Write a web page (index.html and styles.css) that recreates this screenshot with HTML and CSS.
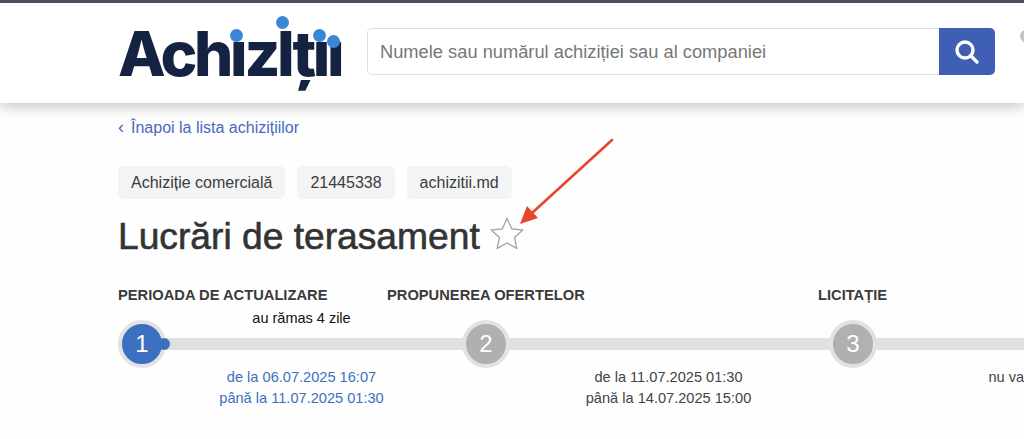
FILE: index.html
```html
<!DOCTYPE html>
<html lang="ro">
<head>
    <meta charset="UTF-8">
    <meta name="viewport" content="width=device-width, initial-scale=1.0">
    <title>Lucrări de terasament</title>
    <link rel="stylesheet" href="styles.css">
</head>
<body>
    <header class="header">
        <a class="logo" href="#">Ach<span class="logo-low">ı</span>z<span class="logo-tall">I</span>ț<span class="logo-low">ı</span><span class="logo-last">ı</span></a>
        <form class="search">
            <input class="search-input" type="text" placeholder="Numele sau numărul achiziției sau al companiei">
            <button class="search-button" type="button" aria-label="Caută">
                <svg width="26" height="26" viewBox="0 0 26 26" fill="none" stroke="#fff">
                    <circle cx="11" cy="11" r="8" stroke-width="3.4"/>
                    <path d="M17 17l6 6" stroke-width="3.4" stroke-linecap="round"/>
                </svg>
            </button>
        </form>
        <svg class="heart" width="20" height="18" viewBox="0 0 20 18">
            <path d="M10 18C4 13 0 10 0 5.500 0 2.500 2.300 0 5.200 0 7.200 0 9 1 10 3 11 1 12.800 0 14.800 0 17.700 0 20 2.500 20 5.500 20 10 16 13 10 18z" fill="#c4c4c4"/>
        </svg>
    </header>

    <main class="content">
        <a class="back" href="#"><span class="back-arrow">‹</span>Înapoi la lista achizițiilor</a>

        <div class="chips">
            <span class="chip">Achiziție comercială</span>
            <span class="chip">21445338</span>
            <span class="chip">achizitii.md</span>
        </div>

        <h1 class="title">
            Lucrări de terasament
            <svg class="star" width="34" height="32" viewBox="0 0 34 32">
                <path d="M17 1.500l4.700 10.300 11 1.200-8.200 7.500 2.300 11-9.800-5.600-9.800 5.600 2.300-11L1.300 13l11-1.200z" fill="#fff" stroke="#a3a3a3" stroke-width="1.300"/>
            </svg>
        </h1>

        <div class="stages">
            <div class="stage-titles">
                <span class="stage-title first">PERIOADA DE ACTUALIZARE</span>
                <span class="stage-title second">PROPUNEREA OFERTELOR</span>
                <span class="stage-title">LICITAȚIE</span>
            </div>
            <div class="remaining">au rămas 4 zile</div>
            <div class="track">
                <span class="step active">1</span>
                <span class="segment segment-a"></span>
                <span class="step">2</span>
                <span class="segment segment-b"></span>
                <span class="step">3</span>
                <span class="segment segment-c"></span>
            </div>
            <div class="dates">
                <div class="date active">de la 06.07.2025 16:07<br>până la 11.07.2025 01:30</div>
                <div class="date">de la 11.07.2025 01:30<br>până la 14.07.2025 15:00</div>
                <div class="date">nu va avea loc</div>
            </div>
        </div>
    </main>

    <!-- red annotation arrow over the star -->
    <svg class="arrow" width="110" height="100" viewBox="0 0 110 100">
        <path d="M100 3L20 76" fill="none" stroke="#e8452f" stroke-width="2.600" stroke-linecap="round"/>
        <path d="M8 87l7-18 11 12z" fill="#e8452f"/>
    </svg>
</body>
</html>
```

FILE: styles.css
```css
html, body {
    height: 439px;
    overflow: hidden;
}
body {
    margin: 0;
    position: relative;
    font-family: "Liberation Sans", sans-serif;
    background-color: #fefefe;
    color: #333;
}
a {
    text-decoration: none;
}

.header {
    display: flex;
    align-items: flex-start;
    box-sizing: border-box;
    height: 103px;
    padding-left: 118px;
    background: white;
    border-top: 3px solid #4a4f5c;
    box-shadow: 0 2px 14px rgba(0,0,0,0.28);
}
.logo {
    flex: 0 0 249px;
    margin-top: 13px;
    font-family: Inter, sans-serif;
    font-size: 62px;
    line-height: 76px;
    font-weight: 800;
    letter-spacing: -3.300px;
    color: #152342;
    white-space: nowrap;
}
.logo-low, .logo-tall, .logo-last {
    position: relative;
}
.logo-low::before, .logo-tall::before, .logo-last::before {
    content: "";
    position: absolute;
    left: 50%;
    width: 13px;
    height: 13px;
    margin-left: -7px;
    border-radius: 50%;
    background: #3b87d6;
}
.logo-low::before { top: 13px; }
.logo-last::before { top: 19px; }
.logo-tall::before { top: 0; margin-left: -9px; }

.search {
    display: flex;
    flex: 0 0 628px;
    height: 47px;
    margin-top: 25px;
}
.search-input {
    flex: 1;
    min-width: 0;
    box-sizing: border-box;
    padding: 0 12px;
    border: 1px solid #e0e0e0;
    border-right: none;
    border-radius: 5px 0 0 5px;
    font-family: "Liberation Sans", sans-serif;
    font-size: 18.300px;
    color: #333;
    outline: none;
}
.search-input::placeholder {
    color: #777;
}
.search-button {
    display: flex;
    align-items: center;
    justify-content: center;
    flex: 0 0 56px;
    padding: 0;
    border: none;
    border-radius: 0 5px 5px 0;
    background: #3f5fb5;
}
.heart {
    flex: none;
    margin: 27px 0 0 25px;
}

.content {
    padding-left: 118px;
}
.back {
    display: block;
    margin-top: 16px;
    font-size: 16px;
    line-height: 17px;
    color: #4a69bd;
}
.back-arrow {
    display: inline-block;
    width: 13px;
    font-size: 18px;
    line-height: 17px;
}
.chips {
    display: flex;
    gap: 12px;
    margin-top: 30px;
}
.chip {
    padding: 0 13px;
    height: 33px;
    line-height: 33px;
    font-size: 16px;
    color: #3c3c3c;
    background: #f3f4f5;
    border-radius: 5px;
}
.title {
    display: flex;
    align-items: center;
    gap: 10px;
    margin: 15px 0 0;
    height: 44px;
    font-size: 37.200px;
    font-weight: normal;
    color: #333;
    -webkit-text-stroke: 0.6px #333;
}
.star {
    margin-top: -6px;
}

.stages {
    width: 1120px;
    margin-top: 29px;
}
.stage-titles {
    display: flex;
    height: 17px;
    font-size: 14.700px;
    line-height: 17px;
    font-weight: bold;
    color: #3a3a3a;
}
.stage-title {
    white-space: nowrap;
}
.first { flex: 0 0 269px; }
.second { flex: 0 0 431px; }

.remaining {
    width: 367px;
    height: 14px;
    margin: 7px 0 -5px;
    text-align: center;
    font-size: 14.500px;
    line-height: 14px;
    color: #111;
}
.track {
    display: flex;
    align-items: center;
    height: 48px;
}
.step {
    flex: none;
    box-sizing: border-box;
    width: 48px;
    height: 48px;
    line-height: 40px;
    text-align: center;
    font-size: 24px;
    color: white;
    background: #b0b0b0;
    border: 4px solid #e2e2e2;
    border-radius: 50%;
}
.step.active {
    background: #3b70c0;
}
.segment {
    height: 12px;
    margin: 0 -1px;
    background: #e0e0e0;
}
.segment-a { flex: 0 0 298px; position: relative; }
.segment-a::before {
    content: "";
    position: absolute;
    left: -7px;
    top: 0;
    width: 12px;
    height: 12px;
    border-radius: 50%;
    background: #3b70c0;
}
.segment-b { flex: 0 0 321px; }
.segment-c { flex: 1; }

.dates {
    display: grid;
    grid-template-columns: repeat(3, 367px);
    margin-top: -1px;
}
.date {
    text-align: center;
    font-size: 14.600px;
    line-height: 21px;
    color: #444;
    white-space: nowrap;
}
.date.active {
    color: #3b70c0;
}

.arrow {
    position: absolute;
    left: 512px;
    top: 137px;
}
```
